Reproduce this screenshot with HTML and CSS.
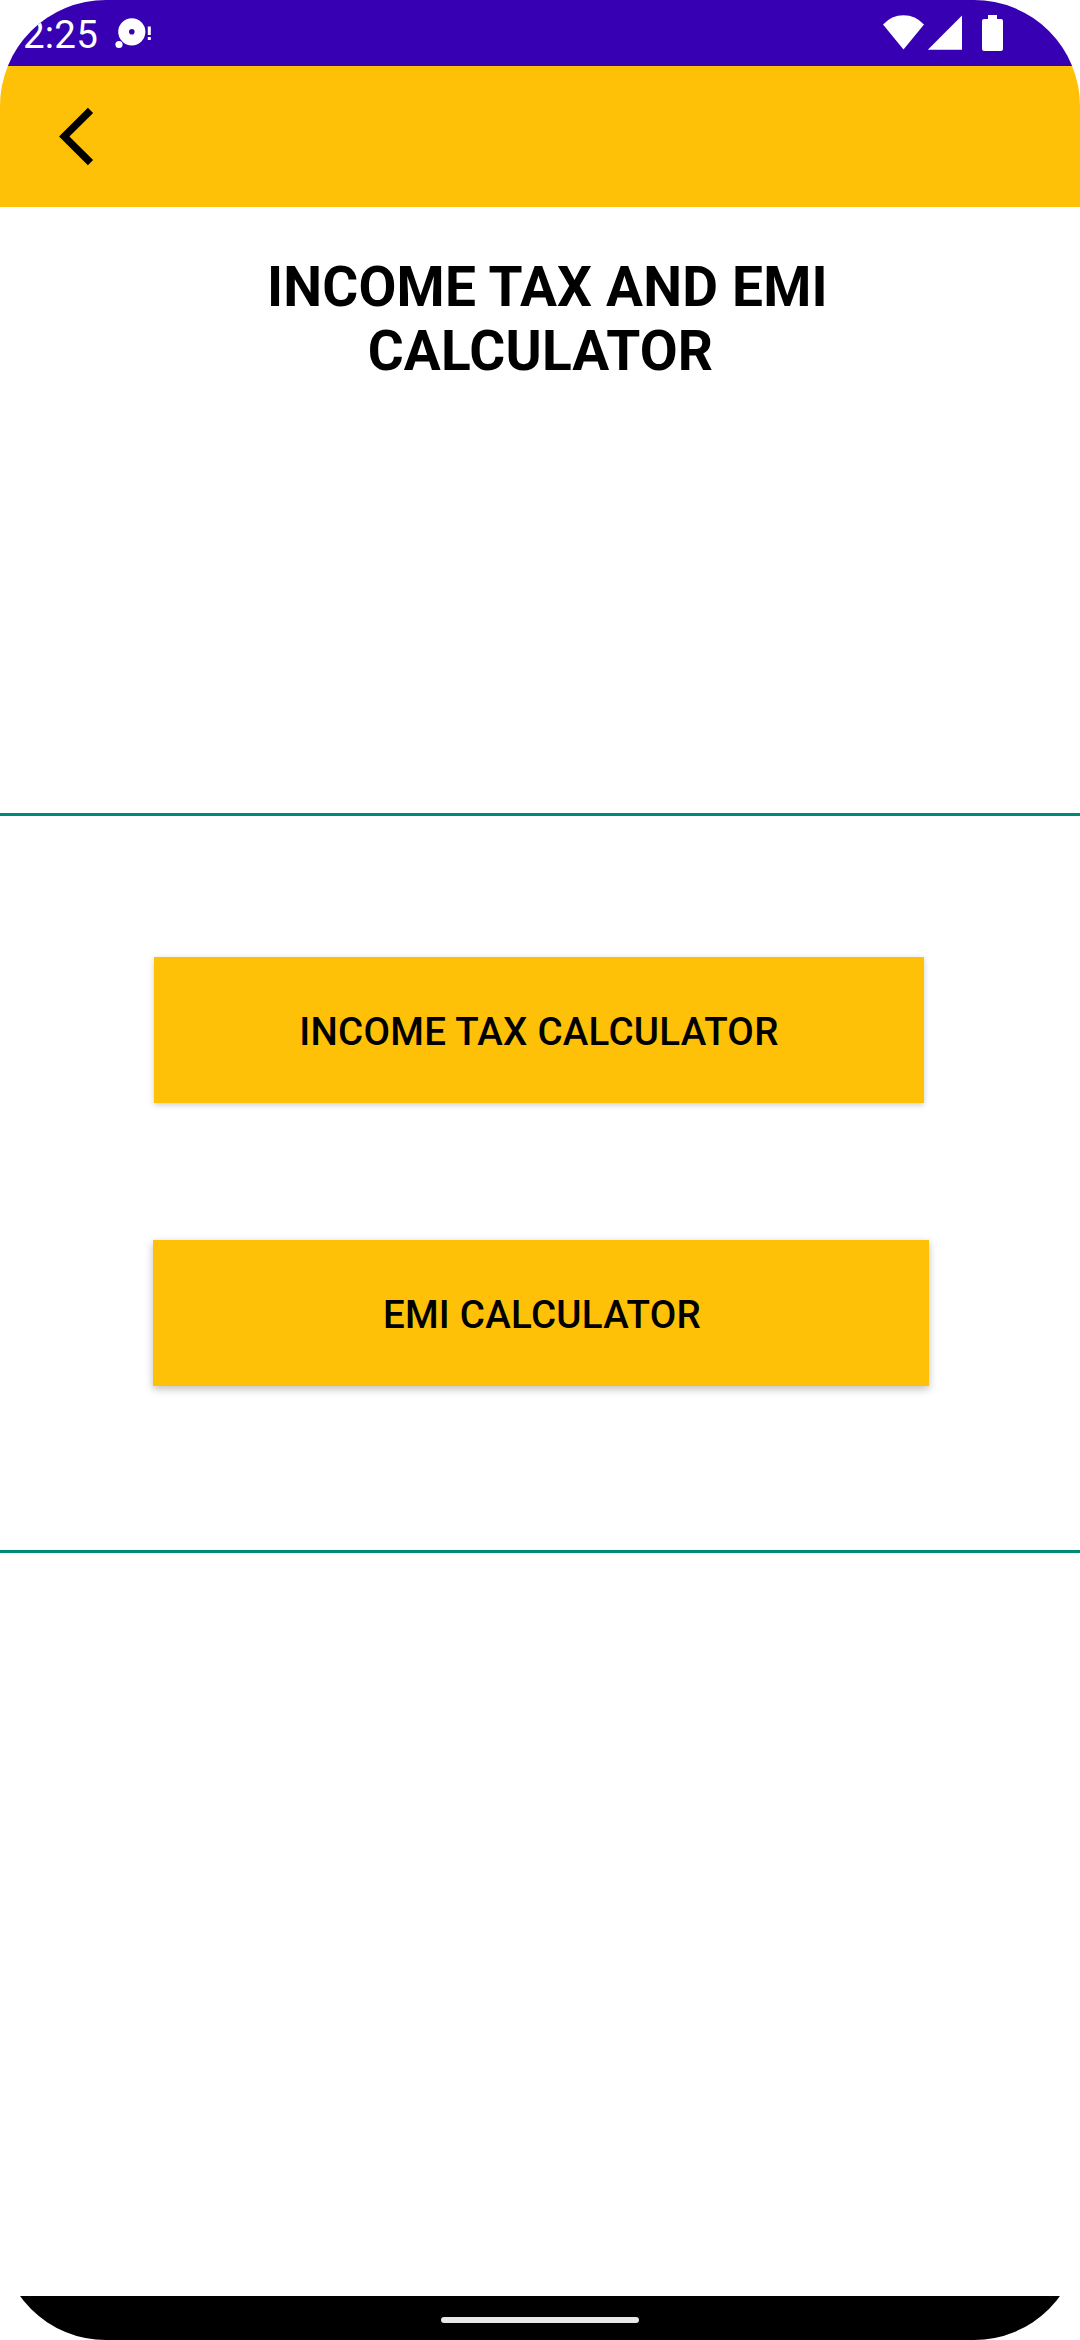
FILE: index.html
```html
<!DOCTYPE html>
<html lang="en">
<head>
<meta charset="utf-8">
<title>Income Tax and EMI Calculator</title>
<link rel="stylesheet" href="styles.css">
</head>
<body>
<div class="screen">
  <div class="status-bar">
    <span class="clock">2:25</span>
    <svg class="notification" width="36" height="32" viewBox="115 17 36 32">
      <path fill="#fff" fill-rule="evenodd" d="M118.2 31.8a13.6 13.6 0 1 0 27.2 0a13.6 13.6 0 1 0-27.2 0zM129 31.8a2.8 2.8 0 1 1 5.6 0a2.8 2.8 0 1 1-5.6 0z"/>
      <circle cx="119" cy="44.5" r="4.4" fill="#3700b3"/>
      <circle cx="119" cy="44.5" r="3.6" fill="#fff"/>
      <path fill="#fff" d="M147.8 26.5h3v8.5h-3zM147.8 37h3v3h-3z"/>
    </svg>
    <svg class="signals" width="121" height="36" viewBox="883 15 121 36">
      <path fill="#fff" d="M903.5 49.5L883 24.5Q891.500 15.200 903.500 15.200T924 24.500zM927.800 49.700L962 15.500V49.700zM988 15h9v4h4q2 0 2 2v28q0 2-2 2h-17q-2 0-2-2v-28q0-2 2-2h4z"/>
    </svg>
  </div>
  <header class="app-bar">
    <svg class="back" width="36" height="60" viewBox="58 106 36 60">
      <path fill="none" stroke="#000" stroke-width="7.4" d="M90.500 110.400L64.300 136.500L90.500 162.600"/>
    </svg>
  </header>
  <main class="content">
    <h1 class="title">&nbsp;INCOME TAX AND EMI<br>CALCULATOR</h1>
    <div class="options">
      <button class="option option-tax">INCOME TAX CALCULATOR</button>
      <button class="option option-emi">EMI CALCULATOR</button>
    </div>
  </main>
  <footer class="nav-bar"><div class="home-pill"></div></footer>
</div>
</body>
</html>
```

FILE: styles.css
```css
* { box-sizing: border-box; }

body {
  margin: 0;
  background: #fff;
  font-family: Roboto, sans-serif;
}

.screen {
  display: flex;
  flex-direction: column;
  width: 1080px;
  height: 2340px;
  border-radius: 106px;
  overflow: hidden;
  background: #fff;
}

.status-bar {
  display: flex;
  align-items: flex-start;
  height: 66px;
  padding: 0 76px 0 22px;
  background: #3700b3;
}

.clock {
  width: 93px;
  padding: 12px 0 0 1px;
  font-size: 38.5px;
  line-height: 46px;
  letter-spacing: 0.2px;
  color: #fff;
}

.notification { margin-top: 17px; }

.signals { margin: 15px 0 0 auto; }

.app-bar {
  height: 141px;
  padding: 40px 58px;
  background: #ffc107;
}

.back { display: block; }

.content {
  flex: 1;
  display: flex;
  flex-direction: column;
}

.title {
  height: 606px;
  margin: 0;
  padding: 48px 0 0 1px;
  font-size: 55px;
  font-weight: 700;
  line-height: 64px;
  letter-spacing: 0.2px;
  text-align: center;
  color: #000;
}

.options {
  display: flex;
  flex-direction: column;
  gap: 137px;
  height: 740px;
  padding: 141px 151px 0 153px;
  border-top: 3px solid #00897b;
  border-bottom: 3px solid #00897b;
}

.option {
  height: 146px;
  padding: 2px 0 0;
  border: 0;
  background: #ffc107;
  font-family: inherit;
  font-size: 38.5px;
  font-weight: 500;
  letter-spacing: 0.27px;
  color: #000;
}

.option-tax {
  margin: 0 5px 0 1px;
  box-shadow: 0 2px 6px rgba(0, 0, 0, 0.2);
}

.option-emi {
  padding-left: 2px;
  box-shadow: 0 3px 8px rgba(0, 0, 0, 0.26);
}

.nav-bar {
  display: flex;
  justify-content: center;
  height: 44px;
  padding-top: 21px;
  background: #000;
}

.home-pill {
  width: 198px;
  height: 6px;
  border-radius: 3px;
  background: #e8e8e8;
}
```
